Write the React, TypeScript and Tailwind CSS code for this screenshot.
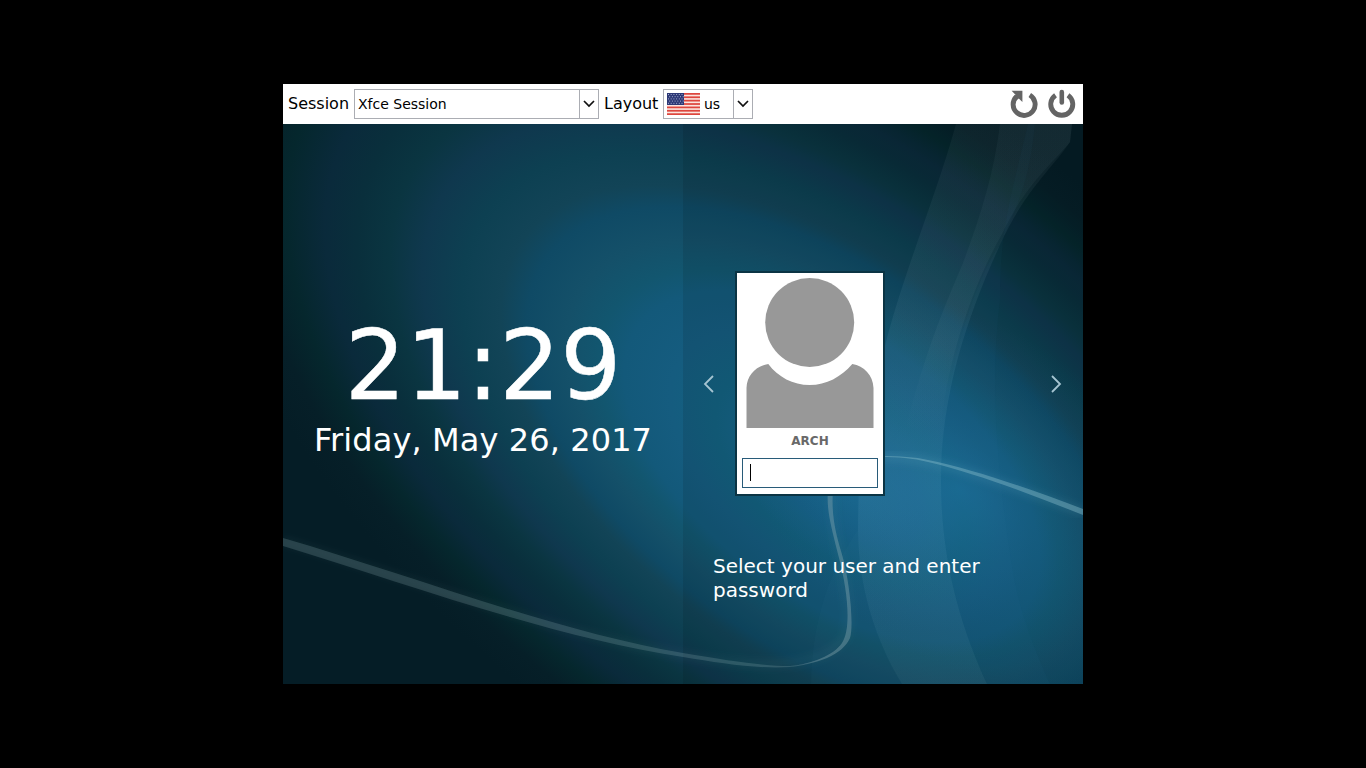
import React, { useId } from "react";

function Wallpaper() {
  const id = useId().replace(/:/g, "");
  const u = (n: string) => `url(#${id}${n})`;
  return (
    <svg className="absolute inset-0 h-full w-full" viewBox="283 124 800 560" aria-hidden="true">
      <defs>
        <radialGradient
          id={id + "glow"}
          gradientUnits="userSpaceOnUse"
          cx="0"
          cy="0"
          r="1.3"
          fx="0.15"
          fy="0.04"
          gradientTransform="translate(795 430) rotate(36) scale(525 285)"
        >
          <stop offset="0" stopColor="#1c6f99" />
          <stop offset="0.13" stopColor="#18658c" />
          <stop offset="0.21" stopColor="#136180" />
          <stop offset="0.28" stopColor="#155c7f" />
          <stop offset="0.35" stopColor="#13597a" />
          <stop offset="0.39" stopColor="#12566f" />
          <stop offset="0.44" stopColor="#145069" />
          <stop offset="0.5" stopColor="#0f4a65" />
          <stop offset="0.54" stopColor="#124457" />
          <stop offset="0.6" stopColor="#0d4052" />
          <stop offset="0.66" stopColor="#0f384e" />
          <stop offset="0.71" stopColor="#0a3541" />
          <stop offset="0.76" stopColor="#092f3c" />
          <stop offset="0.81" stopColor="#0a2a3b" />
          <stop offset="0.87" stopColor="#05272d" />
          <stop offset="0.93" stopColor="#061f28" />
          <stop offset="1" stopColor="#051d26" />
        </radialGradient>
        <radialGradient
          id={id + "spot"}
          gradientUnits="userSpaceOnUse"
          cx="0"
          cy="0"
          r="1"
          gradientTransform="translate(960 490) rotate(35) scale(250 165)"
        >
          <stop offset="0" stopColor="#2383b8" stopOpacity="0.42" />
          <stop offset="1" stopColor="#16628c" stopOpacity="0" />
        </radialGradient>
        <linearGradient id={id + "ray"} x1="0" y1="0" x2="0" y2="1">
          <stop offset="0" stopColor="#9aabb0" stopOpacity="0.06" />
          <stop offset="0.45" stopColor="#76aac0" stopOpacity="0.11" />
          <stop offset="0.7" stopColor="#65a4c6" stopOpacity="0.13" />
          <stop offset="1" stopColor="#73a6b7" stopOpacity="0.1" />
        </linearGradient>
        <linearGradient id={id + "inner"} x1="0" y1="0" x2="0" y2="1">
          <stop offset="0" stopColor="#91b1bb" stopOpacity="0.05" />
          <stop offset="0.7" stopColor="#91b1bb" stopOpacity="0.06" />
          <stop offset="1" stopColor="#91b1bb" stopOpacity="0" />
        </linearGradient>
        <filter id={id + "soft"} x="-10%" y="-10%" width="120%" height="120%">
          <feGaussianBlur stdDeviation="3.5" />
        </filter>
      </defs>
      <rect x="283" y="124" width="800" height="560" fill={u("glow")} />
      <rect x="683" y="124" width="400" height="560" fill="#000" fillOpacity="0.09" />
      <rect x="683" y="124" width="400" height="560" fill={u("spot")} />
      <path
        d="M956 124 C938 190 905 270 887 338 C870 405 858 450 858 530 C858 585 875 640 902 684 L987 684 C960 625 941 560 941 480 C941 390 970 310 1000 245 C1025 190 1051 170 1070 142 L1072 124 Z"
        fill={u("ray")}
      />
      <path
        d="M1000 124 C994 175 979 220 963 263 C943 310 926 350 905 430 L941 430 C945 370 970 290 1002 234 C1025 185 1051 165 1070 142 L1072 124 Z"
        fill={u("inner")}
      />
      <path
        d="M1028 124 C1010 200 1000 230 1000 300 C990 380 996 460 1011 560 C1019 614 1035 650 1050 684 L987 684 C960 625 941 560 941 480 C941 370 980 270 1000 245 C1025 190 1030 170 1035 124 Z"
        fill="#3289b5"
        fillOpacity="0.04"
      />
      <path d="M902 684 C875 640 858 585 858 530 C830 570 812 620 811 684 Z" fill="#6ea5b8" fillOpacity="0.03" />

      <path
        d="M283 541 C410 578 558 635 683 655 C760 669 825 670 846 636 C856 600 830 540 832 494"
        fill="none"
        stroke="#76a4af"
        strokeOpacity="0.07"
        strokeWidth="9"
        filter={u("soft")}
      />
      <path d="M880 457 C940 457 990 480 1083 512" fill="none" stroke="#73b7cc" strokeOpacity="0.14" strokeWidth="9" filter={u("soft")} />
      <path
        d="M283 538 C410 575 558 632 683 653 C730 661 765 666 790 666 C812 664 834 655 842 643 C852 628 847 588 839 558 C832 530 826 510 828 490 L833 490 C831 515 836 534 841 551 C850 580 854 626 850 638 C842 656 816 664 790 667 C755 669 720 663 683 657 C555 638 410 585 283 546 Z"
        fill="#8eabb3"
        fillOpacity="0.23"
      />
      <path
        d="M828 490 C826 510 832 530 839 558 C847 588 852 628 842 643 C834 655 812 664 790 666 C816 664 842 656 850 638 C854 626 850 580 841 551 C836 534 831 515 833 490 Z"
        fill="#8eabb3"
        fillOpacity="0.2"
      />
      <path
        d="M880 456 C900 456 915 457 928 460 C970 468 1030 489 1083 509 L1083 515 C1030 494 975 473 928 462 C913 458 897 457 880 457 Z"
        fill="#8cc0cd"
        fillOpacity="0.4"
      />
    </svg>
  );
}

function DropArrow({ className }: { className: string }) {
  return (
    <span className={`flex h-full items-center justify-center border-l border-[#abadb3] ${className}`}>
      <svg width="12" height="8" viewBox="0 0 12 8" aria-hidden="true">
        <path d="M1 1 L6 6 L11 1" fill="none" stroke="#101010" strokeWidth="1.7" />
      </svg>
    </span>
  );
}

function UsFlag() {
  return (
    <svg className="shrink-0" width="33" height="22" viewBox="0 0 33 22" aria-hidden="true">
      <rect width="33" height="22" fill="#fbe4de" />
      {[0, 1, 2, 3, 4, 5, 6].map((n) => (
        <rect key={n} y={n * 3.38} width="33" height="1.75" fill="#dd463e" />
      ))}
      <rect width="17" height="12" fill="#2c3876" />
      {[0, 1, 2, 3, 4].map((r) =>
        [0, 1, 2, 3, 4, 5].map((c) => (
          <rect key={`${r}-${c}`} x={1 + c * 2.7 + (r % 2) * 1.2} y={1 + r * 2.2} width="1" height="1" fill="#a8afd0" />
        )),
      )}
    </svg>
  );
}

function Restart() {
  return (
    <svg width="28" height="30" viewBox="1010 89 28 30" aria-hidden="true">
      <path d="M1016.5 96.5 A11 11 0 1 0 1029.8 95" fill="none" stroke="#646464" strokeWidth="4.9" />
      <path d="M1011.6 90.8 H1022.4 V102 L1018.8 98.5 L1015.7 101 L1012.8 98 L1015.5 94.8 Z" fill="#646464" />
    </svg>
  );
}

function Power() {
  return (
    <svg width="28" height="30" viewBox="1048 89 28 30" aria-hidden="true">
      <path d="M1055.5 95.2 A11 11 0 1 0 1068 95.2" fill="none" stroke="#646464" strokeWidth="4.9" />
      <path d="M1061.8 92 V102.5" stroke="#646464" strokeWidth="4.6" strokeLinecap="round" />
    </svg>
  );
}

function Chevron({ d }: { d: string }) {
  return (
    <svg width="12" height="18" viewBox="0 0 12 18" aria-hidden="true">
      <path d={d} fill="none" stroke="#a6c5d2" strokeWidth="1.8" />
    </svg>
  );
}

function UserCard() {
  return (
    <div className="flex h-[225px] w-[150px] flex-col items-center border-2 border-[#0b3444] bg-white pt-[5px]">
      <svg className="shrink-0" width="128" height="150" viewBox="746 278 128 150" aria-hidden="true">
        <circle cx="809.7" cy="322.5" r="44.5" fill="#989898" />
        <path
          d="M746.5 428 V388 C747 375 756 366 768.3 364 C778 377 793 385 809.7 385 C826.5 385 841 377 852.3 364 C864 366 873 375 873.5 388 V428 Z"
          fill="#989898"
        />
      </svg>
      <span className="mt-[5px] text-[12px] leading-4 font-bold text-[#696969]">ARCH</span>
      <div className="mt-[9px] flex h-[30px] w-[136px] items-center border border-[#285b79] pl-[7px]">
        <span className="-mt-px h-[17px] w-px bg-black" />
      </div>
    </div>
  );
}

export default function App() {
  return (
    <div className="flex h-screen items-center justify-center overflow-hidden bg-black font-['DejaVu_Sans',sans-serif]">
      <main className="flex h-[600px] w-[800px] flex-col">
        <header className="flex h-10 shrink-0 items-center bg-white pr-[7px] pl-[5px] text-[16px] leading-5 text-black">
          <span className="w-[66px] shrink-0">Session</span>
          <div className="flex h-[30px] w-[245px] items-center border border-[#abadb3] text-[14px]">
            <span className="flex-1 pl-[3px]">Xfce Session</span>
            <DropArrow className="w-[19px]" />
          </div>
          <span className="ml-[5px] w-[59px] shrink-0">Layout</span>
          <div className="flex h-[30px] w-[90px] items-center border border-[#abadb3] text-[14px]">
            <span className="flex flex-1 items-center gap-1 pl-[3px]">
              <UsFlag />
              us
            </span>
            <DropArrow className="w-[19px]" />
          </div>
          <div className="ml-auto flex gap-2.5">
            <Restart />
            <Power />
          </div>
        </header>

        <div className="relative h-[560px]">
          <Wallpaper />
          <div className="relative flex h-full text-white">
            <section className="flex w-[400px] flex-col items-center pt-[186px]">
              <time className="text-[96px] leading-[112px] whitespace-nowrap [-webkit-text-stroke:0.5px_white]">21:29</time>
              <span className="-mt-px text-[32px] leading-[38px] tracking-[0.1px] whitespace-nowrap">Friday, May 26, 2017</span>
            </section>
            <section className="flex w-[400px] flex-col pt-[147px]">
              <div className="flex items-center pr-[21px] pl-[20px]">
                <Chevron d="M10 1 L2 9 L10 17" />
                <div className="ml-5 flex-1">
                  <UserCard />
                </div>
                <Chevron d="M2 1 L10 9 L2 17" />
              </div>
              <p className="mt-[58px] ml-[30px] w-[320px] text-[20px] leading-6">Select your user and enter password</p>
            </section>
          </div>
        </div>
      </main>
    </div>
  );
}
